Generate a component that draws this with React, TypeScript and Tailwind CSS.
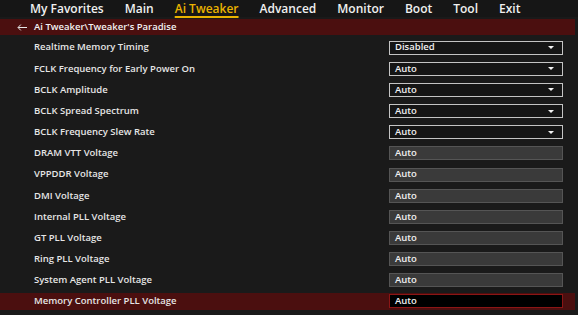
const tabs = ['My Favorites', 'Main', 'Ai Tweaker', 'Advanced', 'Monitor', 'Boot', 'Tool', 'Exit'];

type Row = { label: string; value: string; kind: 'select' | 'input' };

const rows: Row[] = [
  { label: 'Realtime Memory Timing', value: 'Disabled', kind: 'select' },
  { label: 'FCLK Frequency for Early Power On', value: 'Auto', kind: 'select' },
  { label: 'BCLK Amplitude', value: 'Auto', kind: 'select' },
  { label: 'BCLK Spread Spectrum', value: 'Auto', kind: 'select' },
  { label: 'BCLK Frequency Slew Rate', value: 'Auto', kind: 'select' },
  { label: 'DRAM VTT Voltage', value: 'Auto', kind: 'input' },
  { label: 'VPPDDR Voltage', value: 'Auto', kind: 'input' },
  { label: 'DMI Voltage', value: 'Auto', kind: 'input' },
  { label: 'Internal PLL Voltage', value: 'Auto', kind: 'input' },
  { label: 'GT PLL Voltage', value: 'Auto', kind: 'input' },
  { label: 'Ring PLL Voltage', value: 'Auto', kind: 'input' },
  { label: 'System Agent PLL Voltage', value: 'Auto', kind: 'input' },
  { label: 'Memory Controller PLL Voltage', value: 'Auto', kind: 'input' },
];

const Caret = () => (
  <svg width="6" height="3" viewBox="0 0 6 3" className="mr-[8px]">
    <path d="M0 0 H6 L3 3 Z" fill="#f2f2f2" />
  </svg>
);

export default function App() {
  return (
    <div
      className="w-[578px] h-[315px] overflow-hidden bg-[#1a1a1a] text-[#e8e8e8]"
      style={{ fontFamily: '"Open Sans", "Noto Sans", sans-serif' }}
    >
      <nav className="flex h-[17px] items-center pl-[30px] gap-[21px] bg-[#161616]">
        {tabs.map((t) => (
          <span
            key={t}
            className={
              t === 'Ai Tweaker'
                ? 'text-[12px] font-semibold leading-none text-[#e9b200] underline underline-offset-[3px] decoration-[1.5px]'
                : 'text-[12px] font-semibold leading-none text-[#f0f0f0]'
            }
          >
            {t}
          </span>
        ))}
      </nav>

      <div className="mt-[2px] mr-[3px] flex h-[16px] items-center bg-[#4b0f0f] pl-[17px]">
        <svg width="10" height="7" viewBox="0 0 10 7" className="mr-[7px]">
          <path d="M10 3.5 H1.2 M3.8 0.6 L1 3.5 L3.8 6.4" stroke="#e8e8e8" strokeWidth="1" fill="none" />
        </svg>
        <span className="text-[9.5px] font-semibold text-[#f2f2f2]">Ai Tweaker\Tweaker's Paradise</span>
      </div>

      <div className="mt-[2px] flex flex-col">
        {rows.map((r, i) => {
          const last = i === rows.length - 1;
          return (
            <div key={r.label} className="h-[21.17px] flex items-center">
              <div
                className={
                  last
                    ? 'flex h-[17px] w-[575px] items-center bg-[#4b0f0f]'
                    : 'flex h-[17px] w-[575px] items-center'
                }
              >
                <span className="w-[389px] shrink-0 pl-[34px] text-[9.5px] font-semibold text-[#e6e6e6]">{r.label}</span>
                {r.kind === 'select' ? (
                  <div className="flex h-[14px] w-[174px] items-center justify-between border border-[#c4c4c4] bg-[#151515] pl-[5px]">
                    <span className="text-[9.5px] font-semibold text-[#f0f0f0]">{r.value}</span>
                    <Caret />
                  </div>
                ) : (
                  <div
                    className={
                      last
                        ? 'flex h-[14px] w-[174px] items-center border border-[#8c1515] bg-black pl-[5px]'
                        : 'flex h-[14px] w-[174px] items-center border border-[#555] bg-[#3a3a3a] pl-[5px]'
                    }
                  >
                    <span className="text-[9.5px] font-semibold text-[#f0f0f0]">{r.value}</span>
                  </div>
                )}
              </div>
            </div>
          );
        })}
      </div>
    </div>
  );
}
